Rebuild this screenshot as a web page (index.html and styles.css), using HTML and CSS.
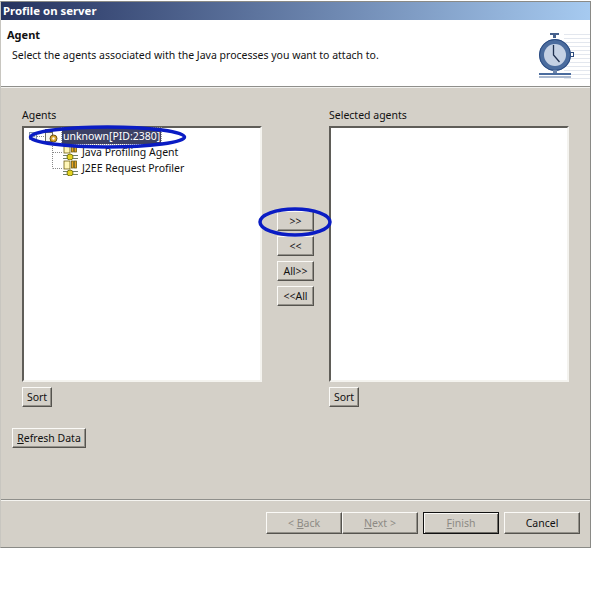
FILE: index.html
```html
<!DOCTYPE html>
<html lang="en">
<head>
<meta charset="utf-8">
<title>Profile on server</title>
<link rel="stylesheet" href="styles.css">
</head>
<body>
<div class="window">
  <div class="titlebar">Profile on server</div>
  <header class="header">
    <div class="header-text">
      <h1 class="page-title">Agent</h1>
      <p class="page-desc">Select the agents associated with the Java processes you want to attach to.</p>
    </div>
    <div class="header-art">
      <svg class="stopwatch" width="52" height="50" viewBox="0 0 52 50">
        <path d="M26 2.500H52M26 6.500H52M26 10.500H52M26 14.500H52M26 18.500H52M26 22.500H52M26 26.500H52M26 30.500H52M26 34.500H52M26 38.500H52M26 42.500H52M26 46.500H52" stroke="#e3e7ee"/>
        <path d="M12 1h9v2h-3v3h-3V3h-3z" fill="#45608c"/>
        <rect x="32" y="20.500" width="3.500" height="4" fill="#fff" stroke="#2c4a7c"/>
        <circle cx="17" cy="23" r="16" fill="#4b6c9e"/>
        <circle cx="17" cy="23" r="15.500" fill="none" stroke="#2a4a80"/>
        <circle cx="17" cy="23" r="11" fill="#c5d1e4"/>
        <path d="M15.500 13v10l6 7" fill="none" stroke="#20304f" stroke-width="1.300"/>
        <path d="M15 38h4v4h-4z" fill="#6f87ac"/>
        <path d="M1 41h32v2H1z" fill="#4b6c9e"/>
        <path d="M1 44h32v2H1z" fill="#a9b8cf"/>
      </svg>
    </div>
  </header>

  <main class="body">
    <div class="pickers">
      <section class="picker">
        <label class="picker-label">Agents</label>
        <div class="listbox">
          <div class="tree-row">
            <svg width="33" height="16" viewBox="0 0 33 16" class="tree-icon">
              <rect x="0.500" y="4.500" width="7" height="7" fill="#e8edf5" stroke="#7f8fa8"/>
              <path d="M2 8h4" stroke="#33507f"/>
              <path d="M8 8.500h8" stroke="#888" stroke-dasharray="1 1"/>
              <rect x="16.500" y="1.500" width="7" height="12" fill="#f4f4ee" stroke="#6b6b60"/>
              <path d="M17 4.500h6" stroke="#6b6b60"/>
              <circle cx="24.500" cy="10.500" r="3.500" fill="#d8a52c" stroke="#6a5218"/>
              <circle cx="24.500" cy="10.500" r="1.200" fill="#fff"/>
            </svg>
            <span class="tree-text selected">unknown[PID:2380]</span>
          </div>
          <div class="tree-row">
            <svg width="50" height="16" viewBox="0 0 50 16" class="tree-icon">
              <path d="M23.500 0v16M24 8.500h9" stroke="#888" stroke-dasharray="1 1" fill="none"/>
              <g fill="#e8a020" stroke="#6d5c10" stroke-width="0.800">
                <rect x="35" y="1" width="6" height="8" fill="#fff6b8"/>
                <rect x="42.500" y="1" width="2" height="7"/>
                <rect x="45.500" y="1" width="2" height="7"/>
              </g>
              <path d="M34 11.500h15M34 14.500h15" stroke="#6f7f6a"/>
              <circle cx="41" cy="13" r="3" fill="#e4d21f" stroke="#7c7a16"/>
            </svg>
            <span class="tree-text">Java Profiling Agent</span>
          </div>
          <div class="tree-row">
            <svg width="50" height="16" viewBox="0 0 50 16" class="tree-icon">
              <path d="M23.500 0v8.500M24 8.500h9" stroke="#888" stroke-dasharray="1 1" fill="none"/>
              <g fill="#e8a020" stroke="#6d5c10" stroke-width="0.800">
                <rect x="35" y="1" width="6" height="8" fill="#fff6b8"/>
                <rect x="42.500" y="1" width="2" height="7"/>
                <rect x="45.500" y="1" width="2" height="7"/>
              </g>
              <path d="M34 11.500h15M34 14.500h15" stroke="#6f7f6a"/>
              <circle cx="41" cy="13" r="3" fill="#e4d21f" stroke="#7c7a16"/>
            </svg>
            <span class="tree-text">J2EE Request Profiler</span>
          </div>
        </div>
        <button class="btn btn-sort" type="button">Sort</button>
      </section>

      <div class="transfer">
        <button class="btn btn-move" type="button">&gt;&gt;</button>
        <button class="btn btn-move" type="button">&lt;&lt;</button>
        <button class="btn btn-move" type="button">All&gt;&gt;</button>
        <button class="btn btn-move" type="button">&lt;&lt;All</button>
      </div>

      <section class="picker">
        <label class="picker-label">Selected agents</label>
        <div class="listbox"></div>
        <button class="btn btn-sort" type="button">Sort</button>
      </section>
    </div>
    <button class="btn btn-refresh" type="button"><u>R</u>efresh Data</button>
  </main>

  <footer class="footer">
    <button class="btn btn-nav" type="button" disabled>&lt; <u>B</u>ack</button>
    <button class="btn btn-nav" type="button" disabled><u>N</u>ext &gt;</button>
    <button class="btn btn-nav btn-default" type="button" disabled><u>F</u>inish</button>
    <button class="btn btn-nav" type="button">Cancel</button>
  </footer>

  <svg class="marker marker-tree" width="159" height="26" viewBox="0 0 159 26">
    <ellipse cx="79.500" cy="13" rx="77" ry="10" fill="none" stroke="#0a1cc4" stroke-width="3.500"/>
  </svg>
  <svg class="marker marker-button" width="76" height="32" viewBox="0 0 76 32">
    <ellipse cx="38" cy="16" rx="35" ry="13" fill="none" stroke="#0a1cc4" stroke-width="3.500"/>
  </svg>
</div>
</body>
</html>
```

FILE: styles.css
```css
* { box-sizing: border-box; }

html, body { margin: 0; padding: 0; background: #fff; }

body {
  font-family: "Noto Sans", sans-serif;
  font-size: 10.500px;
  color: #111;
}

.window {
  position: relative;
  width: 591px;
  height: 547px;
  margin-top: 1px;
  background: #d4d0c8;
  border: 1px solid #8a8a86;
  border-left-color: #c8c6c0;
  display: flex;
  flex-direction: column;
}

.titlebar {
  height: 18px;
  padding-left: 2px;
  line-height: 17px;
  font-size: 11.400px;
  font-weight: bold;
  color: #fff;
  background: linear-gradient(90deg, #25325f, #a6caf0);
}

.header {
  height: 67px;
  background: #fff;
  border-bottom: 1px solid #8f8f8b;
  box-shadow: 0 1px 0 #f2f1ee;
  display: flex;
  justify-content: space-between;
}

.page-title {
  margin: 8px 0 0 6px;
  font-size: 11px;
  line-height: 14px;
  font-weight: bold;
}

.page-desc {
  margin: 6px 0 0 11px;
  line-height: 14px;
}

.stopwatch { display: block; margin-top: 12px; }

.body {
  flex: 1;
  padding: 21px 0 0 11px;
}

.pickers {
  display: flex;
  padding-left: 10px;
}

.picker { width: 240px; display: flex; flex-direction: column; align-items: flex-start; }

.picker-label { line-height: 14px; margin-bottom: 4px; display: block; }

.listbox {
  width: 240px;
  height: 256px;
  padding: 0 0 0 5px;
  background: #fff;
  border: 2px solid;
  border-color: #5f5d58 #f4f3ef #f4f3ef #5f5d58;
}

.tree-row { display: flex; align-items: center; height: 16px; }
.tree-icon { display: block; flex: none; }
.tree-text { margin-left: 3px; white-space: nowrap; line-height: 16px; }
.selected { background: #3c4064; color: #fff; margin-left: 0; padding: 0 1px; outline: 1px dotted #999; }

.btn {
  font: inherit;
  color: #111;
  padding: 0;
  background: #d4d0c8;
  border: 1px solid;
  border-color: #fbfaf7 #55534e #55534e #fbfaf7;
  box-shadow: inset -1px -1px 0 #94918a;
  white-space: nowrap;
}

.btn:disabled { color: #8d8a84; }

.btn-sort { width: 30px; height: 20px; margin-top: 5px; }

.transfer {
  width: 67px;
  padding: 103px 0 0 15px;
  display: flex;
  flex-direction: column;
  gap: 5px;
}

.btn-move { width: 37px; height: 20px; }

.btn-refresh { width: 74px; height: 20px; margin-top: 21px; }

.footer {
  height: 48px;
  border-top: 1px solid #8f8f8b;
  box-shadow: inset 0 1px 0 #f5f4f0;
  padding: 12px 10px 0 0;
  display: flex;
  justify-content: flex-end;
}

.btn-nav { width: 76px; height: 22px; margin-left: 5px; }
.btn-nav:first-child { margin-left: 0; }
.btn-nav:nth-child(2) { margin-left: 0; }
.btn-default { border: 1px solid #111; box-shadow: inset 1px 1px 0 #fbfaf7, inset -1px -1px 0 #6e6c66; }

.marker { position: absolute; pointer-events: none; }
.marker-tree { left: 27px; top: 122px; }
.marker-button { left: 256px; top: 204px; }
```
